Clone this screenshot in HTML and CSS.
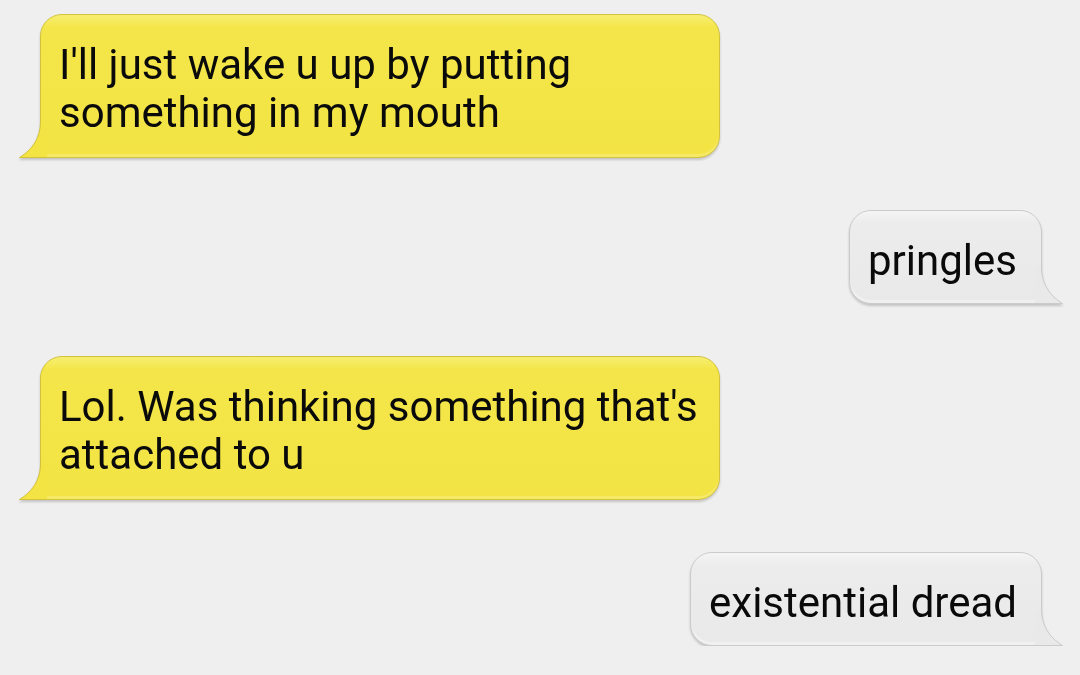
FILE: index.html
```html
<!DOCTYPE HTML>
<html lang="en">
<head>
    <meta charset="UTF-8">
    <meta name="viewport" content="width=device-width, initial-scale=1.0">
    <title>Messages</title>
    <link rel="stylesheet" href="styles.css">
</head>
<body>
    <div class="chat">
        <div class="bubble received">
            <p>I'll just wake u up by putting something in my mouth</p>
            <svg class="tail" width="28" height="36" viewBox="0 0 28 36">
                <path class="tail-fill" d="M22 0 L21.5 0 C21.5 16 13 28 0.5 35.5 L28 35.5 L28 0 Z" />
                <path class="tail-line" d="M21.5 0 C21.5 16 13 28 0.5 35.5 L28 35.5" />
            </svg>
        </div>

        <div class="bubble sent">
            <p>pringles</p>
            <svg class="tail" width="28" height="36" viewBox="0 0 28 36">
                <path class="tail-fill" d="M6 0 L6.5 0 C6.5 16 15 28 27.5 35.5 L0 35.5 L0 0 Z" />
                <path class="tail-line" d="M6.5 0 C6.5 16 15 28 27.5 35.5 L0 35.5" />
            </svg>
        </div>

        <div class="bubble received">
            <p>Lol. Was thinking something that's attached to u</p>
            <svg class="tail" width="28" height="36" viewBox="0 0 28 36">
                <path class="tail-fill" d="M22 0 L21.5 0 C21.5 16 13 28 0.5 35.5 L28 35.5 L28 0 Z" />
                <path class="tail-line" d="M21.5 0 C21.5 16 13 28 0.5 35.5 L28 35.5" />
            </svg>
        </div>

        <div class="bubble sent">
            <p>existential dread</p>
            <svg class="tail" width="28" height="36" viewBox="0 0 28 36">
                <path class="tail-fill" d="M6 0 L6.5 0 C6.5 16 15 28 27.5 35.5 L0 35.5 L0 0 Z" />
                <path class="tail-line" d="M6.5 0 C6.5 16 15 28 27.5 35.5 L0 35.5" />
            </svg>
        </div>
    </div>
</body>
</html>
```

FILE: styles.css
```css
/* Page */
body {
    margin: 0;
    background-color: #efefef;
    font-family: Roboto, "Noto Sans", sans-serif;
    color: #0a0a0a;
}

/* Conversation column */
.chat {
    display: flex;
    flex-direction: column;
    padding: 14px 38px 0 40px;
}

/* Shared bubble look */
.bubble {
    position: relative;
    box-sizing: border-box;
    border: 1px solid;
    border-radius: 22px;
    padding: 26px 24px 18px 18px;
    filter: drop-shadow(0 2px 1px rgba(0, 0, 0, 0.18));
}

.bubble p {
    margin: 0;
    font-size: 42px;
    line-height: 48px;
}

.bubble .tail {
    position: absolute;
    bottom: -1px;
}

.tail-line {
    fill: none;
    stroke-width: 1;
}

/* Incoming messages: yellow, on the left */
.received {
    align-self: flex-start;
    width: 680px;
    padding-right: 14px;
    padding-bottom: 20px;
    background: linear-gradient(#f7ee72 0, #f4e64a 12px, #f3e444 100%);
    border-color: #d3c23c;
    border-bottom-left-radius: 0;
    box-shadow: inset 0 -3px 0 rgba(255, 255, 255, 0.18);
}

.received .tail {
    left: -22px;
}

.received .tail-fill {
    fill: #f3e444;
}

.received .tail-line {
    stroke: #d3c23c;
}

/* Outgoing messages: grey, on the right */
.sent {
    align-self: flex-end;
    background: linear-gradient(#f5f5f5 0, #ececec 12px, #e9e9e9 100%);
    border-color: #cbcbcb;
    border-bottom-right-radius: 0;
    box-shadow: inset 0 -3px 0 rgba(255, 255, 255, 0.35);
}

.sent .tail {
    right: -22px;
}

.sent .tail-fill {
    fill: #e9e9e9;
}

.sent .tail-line {
    stroke: #cbcbcb;
}

/* Spacing between messages */
.chat .bubble + .bubble {
    margin-top: 52px;
}
```
